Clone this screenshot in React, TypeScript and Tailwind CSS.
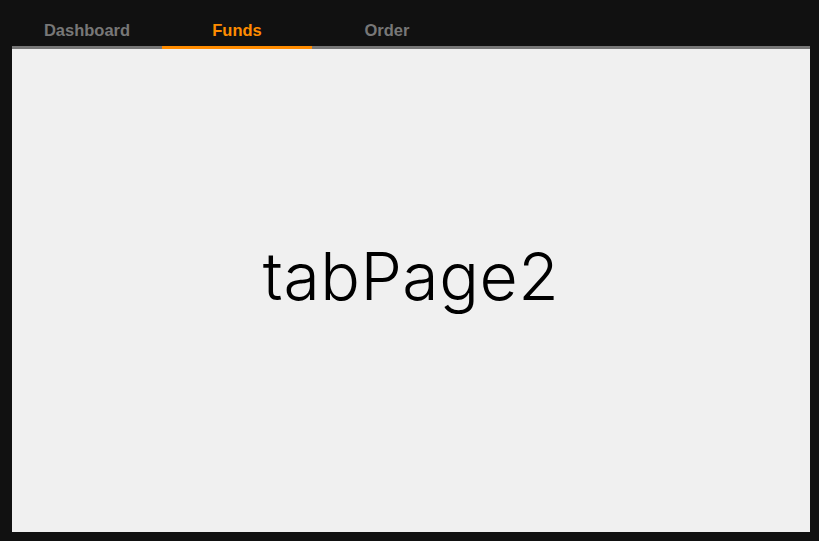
import React, { useState } from 'react';

const tabs = ['Dashboard', 'Funds', 'Order'];

function App() {
  const [active, setActive] = useState(1);

  return (
    <div className="w-[819px] h-[541px] bg-[#111111] flex flex-col pl-[12px] pr-[9px] pb-[9px]">
      {/* Tab strip */}
      <div className="flex h-[49px] shrink-0">
        {tabs.map((t, i) => (
          <button
            key={t}
            onClick={() => setActive(i)}
            className={
              i === active
                ? 'w-[150px] h-full flex items-center justify-center pt-[14px] border-b-[3px] border-[#ff8c00] text-[#ff8c00] text-[16.5px] font-bold'
                : 'w-[150px] h-full flex items-center justify-center pt-[14px] border-b-[3px] border-[#777777] text-[#777777] text-[16.5px] font-bold'
            }
            style={{ fontFamily: '"Liberation Sans", Arial, sans-serif' }}
          >
            {t}
          </button>
        ))}
        <div className="flex-1 border-b-[3px] border-[#777777]" />
      </div>

      {/* Page */}
      <div className="flex-1 bg-[#f0f0f0] flex items-center justify-center pb-[30px]">
        <span
          className="text-[66px] text-black leading-none font-light tracking-[0.5px]"
          style={{ fontFamily: 'Inter, "Liberation Sans", sans-serif' }}
        >
          tabPage{active + 1}
        </span>
      </div>
    </div>
  );
}

export default App;
